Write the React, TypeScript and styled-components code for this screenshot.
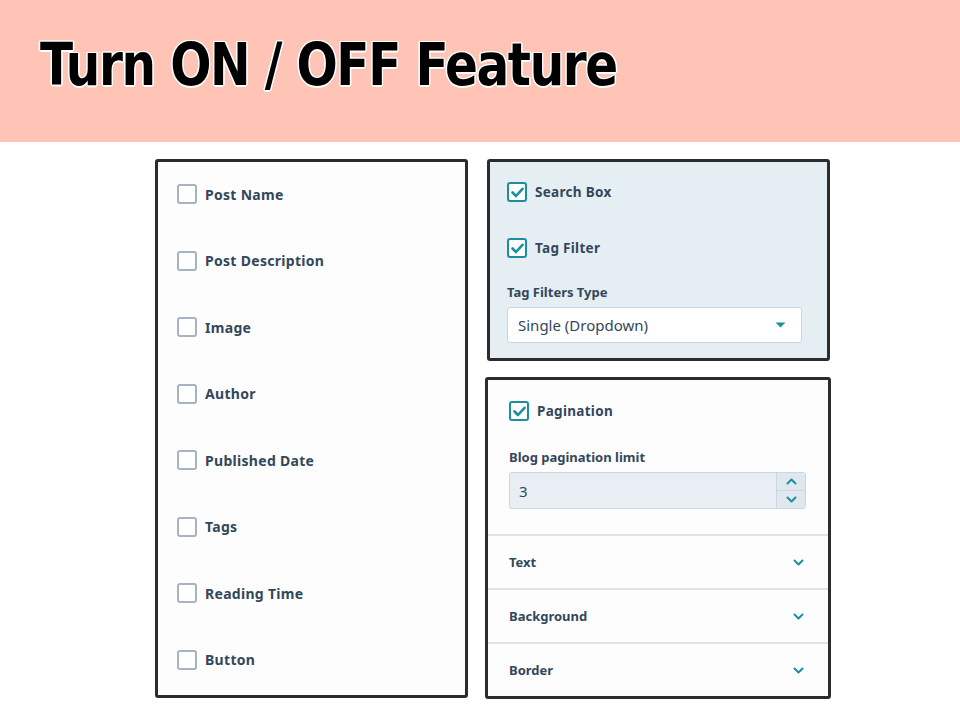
import React from "react";
import styled, { createGlobalStyle } from "styled-components";

const GlobalStyle = createGlobalStyle`
  body {
    margin: 0;
    background: #ffffff;
    font-family: "Noto Sans", "Liberation Sans", sans-serif;
  }
`;

const Page = styled.div`
  width: 960px;
  height: 720px;
  overflow: hidden;
`;

const Header = styled.div`
  height: 142px;
  background: #ffc4b6;
  display: flex;
  align-items: center;
  padding-left: 40px;
  box-sizing: border-box;
`;

const Title = styled.h1`
  margin: 0 0 12px 0;
  font-family: "DejaVu Sans Condensed", "DejaVu Sans", sans-serif;
  font-stretch: condensed;
  font-weight: bold;
  font-size: 58px;
  letter-spacing: -1.5px;
  color: #000;
  transform: scaleX(0.93);
  transform-origin: left center;
  text-shadow: 1.5px 0 0 #fff, -1.5px 0 0 #fff, 0 1.5px 0 #fff, 0 -1.5px 0 #fff,
    1px 1px 0 #fff, -1px -1px 0 #fff, 1px -1px 0 #fff, -1px 1px 0 #fff;
`;

const Content = styled.div`
  display: flex;
  gap: 17px;
  padding: 17px 0 0 155px;
`;

const Panel = styled.div<{ $bg?: string; $w: number; $h: number; $ml?: number }>`
  box-sizing: border-box;
  width: ${(p) => p.$w}px;
  height: ${(p) => p.$h}px;
  margin-left: ${(p) => p.$ml ?? 0}px;
  border: 3px solid #2c2c2c;
  border-radius: 3px;
  background: ${(p) => p.$bg ?? "#fdfdfd"};
  display: flex;
  flex-direction: column;
`;

const LeftList = styled.div`
  display: flex;
  flex-direction: column;
  padding: 22px 0 0 19px;
  gap: 46.5px;
`;

const Column = styled.div`
  display: flex;
  flex-direction: column;
  gap: 16px;
`;

const CheckRow = styled.label<{ $size?: number }>`
  display: flex;
  align-items: center;
  gap: 8px;
  height: 20px;
  font-size: ${(p) => p.$size ?? 14}px;
  font-weight: 700;
  letter-spacing: 0.3px;
  color: #33475b;
`;

const Box = styled.span<{ $on?: boolean }>`
  box-sizing: border-box;
  width: 20px;
  height: 20px;
  border-radius: 3px;
  border: 2px solid ${(p) => (p.$on ? "#1a8fa0" : "#a6b3c2")};
  background: #fff;
  display: flex;
  align-items: center;
  justify-content: center;
`;

const Section = styled.div<{ $pad: string }>`
  display: flex;
  flex-direction: column;
  padding: ${(p) => p.$pad};
`;

const FieldLabel = styled.div`
  font-size: 13px;
  font-weight: 700;
  color: #33475b;
  margin-bottom: 6px;
`;

const Select = styled.div`
  box-sizing: border-box;
  height: 36px;
  width: 295px;
  background: #fff;
  border: 1px solid #cbd6e2;
  border-radius: 3px;
  display: flex;
  align-items: center;
  justify-content: space-between;
  padding: 0 15px 0 10px;
  font-size: 15px;
  color: #33475b;
`;

const NumberField = styled.div`
  box-sizing: border-box;
  height: 37px;
  width: 297px;
  background: #e8eef4;
  border: 1px solid #cbd6e2;
  border-radius: 3px;
  display: flex;
  font-size: 15px;
  color: #33475b;
`;

const NumberValue = styled.div`
  flex: 1;
  display: flex;
  align-items: center;
  padding-left: 9px;
`;

const Spinner = styled.div`
  width: 28px;
  border-left: 1px solid #cbd6e2;
  display: flex;
  flex-direction: column;
  background: #dfe7ef;
`;

const SpinButton = styled.div<{ $top?: boolean }>`
  flex: 1;
  display: flex;
  align-items: center;
  justify-content: center;
  border-bottom: ${(p) => (p.$top ? "1px solid #cbd6e2" : "none")};
`;

const AccordionRow = styled.div<{ $last?: boolean }>`
  flex: ${(p) => (p.$last ? 1 : "none")};
  height: ${(p) => (p.$last ? "auto" : "52px")};
  border-top: 2px solid #dde3ea;
  display: flex;
  align-items: center;
  justify-content: space-between;
  padding: 0 24px 0 21px;
  font-size: 13px;
  font-weight: 700;
  color: #33475b;
`;

const Check = () => (
  <svg width="13" height="11" viewBox="0 0 13 11">
    <path d="M1.5 5.5 L5 9 L11.5 1.8" fill="none" stroke="#1a8fa0" strokeWidth="2.6" strokeLinecap="round" strokeLinejoin="round" />
  </svg>
);

const Chevron = ({ up }: { up?: boolean }) => (
  <svg width="11" height="7" viewBox="0 0 11 7">
    <path
      d={up ? "M1.5 5.5 L5.5 1.5 L9.5 5.5" : "M1.5 1.5 L5.5 5.5 L9.5 1.5"}
      fill="none"
      stroke="#1a8fa0"
      strokeWidth="2"
      strokeLinecap="round"
      strokeLinejoin="round"
    />
  </svg>
);

const Caret = () => (
  <svg width="11" height="6" viewBox="0 0 11 6">
    <path d="M0.5 0.5 L10.5 0.5 L5.5 5.5 Z" fill="#1a8fa0" />
  </svg>
);

const leftItems = [
  "Post Name",
  "Post Description",
  "Image",
  "Author",
  "Published Date",
  "Tags",
  "Reading Time",
  "Button",
];

export default function App() {
  return (
    <Page>
      <GlobalStyle />
      <Header>
        <Title>Turn ON / OFF Feature</Title>
      </Header>
      <Content>
        <Panel $w={313} $h={539}>
          <LeftList>
            {leftItems.map((item) => (
              <CheckRow key={item}>
                <Box />
                {item}
              </CheckRow>
            ))}
          </LeftList>
        </Panel>
        <Column>
          <Panel $w={343} $h={202} $ml={2} $bg="#e5eef3">
            <Section $pad="20px 0 0 17px">
              <CheckRow $size={13.5}>
                <Box $on>
                  <Check />
                </Box>
                Search Box
              </CheckRow>
              <CheckRow $size={13.5} style={{ marginTop: 36 }}>
                <Box $on>
                  <Check />
                </Box>
                Tag Filter
              </CheckRow>
              <FieldLabel style={{ marginTop: 25 }}>Tag Filters Type</FieldLabel>
              <Select>
                Single (Dropdown)
                <Caret />
              </Select>
            </Section>
          </Panel>
          <Panel $w={346} $h={322}>
            <Section $pad="21px 0 25px 21px">
              <CheckRow $size={13.5}>
                <Box $on>
                  <Check />
                </Box>
                Pagination
              </CheckRow>
              <FieldLabel style={{ marginTop: 27 }}>Blog pagination limit</FieldLabel>
              <NumberField>
                <NumberValue>3</NumberValue>
                <Spinner>
                  <SpinButton $top>
                    <Chevron up />
                  </SpinButton>
                  <SpinButton>
                    <Chevron />
                  </SpinButton>
                </Spinner>
              </NumberField>
            </Section>
            <AccordionRow>
              Text
              <Chevron />
            </AccordionRow>
            <AccordionRow>
              Background
              <Chevron />
            </AccordionRow>
            <AccordionRow $last>
              Border
              <Chevron />
            </AccordionRow>
          </Panel>
        </Column>
      </Content>
    </Page>
  );
}
